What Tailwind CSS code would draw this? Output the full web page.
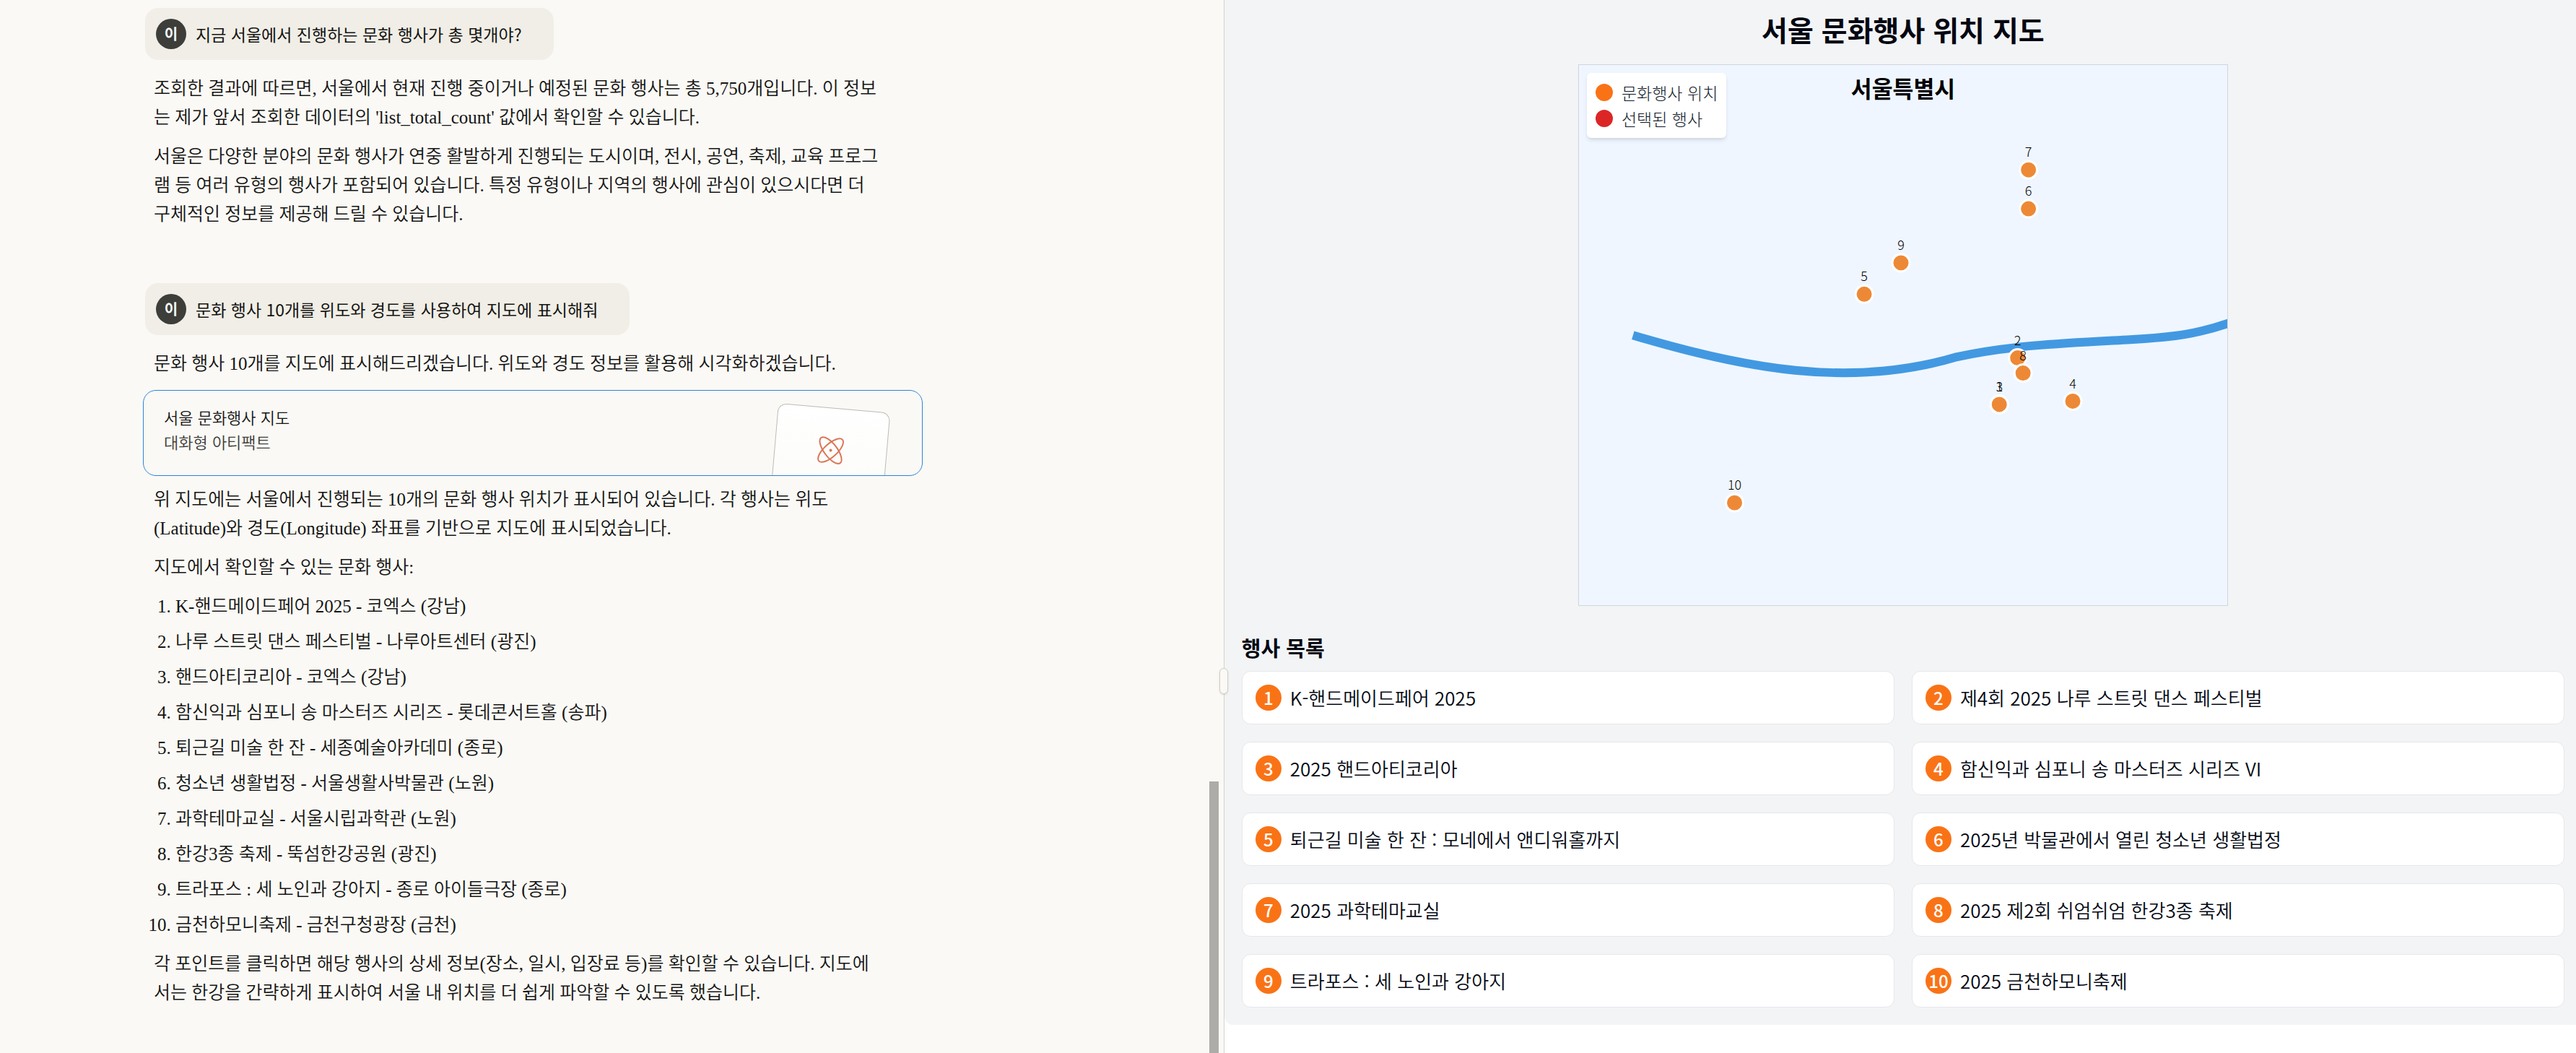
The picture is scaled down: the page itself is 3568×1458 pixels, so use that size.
<!DOCTYPE html>
<html lang="ko">
<head>
<meta charset="utf-8">
<meta name="viewport" content="width=device-width, initial-scale=1">
<title>서울 문화행사 지도</title>
<script src="https://cdn.jsdelivr.net/npm/@tailwindcss/browser@4"></script>
</head>
<body class="flex min-h-screen bg-white font-['Noto_Sans_CJK_KR','Noto_Sans',sans-serif]">

<!-- Conversation -->
<main class="flex w-[47.5%] shrink-0 bg-[#faf9f5] text-[#141413]">
  <div class="min-w-0 flex-1 pt-[11px] pr-4 pl-[198px] font-['Liberation_Serif','Noto_Sans_CJK_KR',serif] text-[25px] leading-[40px] font-[350]">
    <div class="ml-[3px] flex h-[72px] w-fit items-center gap-[13px] rounded-[18px] bg-[#f0eee6] pr-11 pl-[15px] font-['Noto_Sans_CJK_KR',sans-serif] text-[23px] font-normal">
      <span class="flex size-[42px] items-center justify-center rounded-full bg-[#3d3d3a] text-[20px] font-bold text-[#faf9f5]">이</span>
      <p>지금 서울에서 진행하는 문화 행사가 총 몇개야?</p>
    </div>
    <div class="mt-5 ml-[15px] space-y-[14px]">
      <p>조회한 결과에 따르면, 서울에서 현재 진행 중이거나 예정된 문화 행사는 총 5,750개입니다. 이 정보<br>는 제가 앞서 조회한 데이터의 'list_total_count' 값에서 확인할 수 있습니다.</p>
      <p>서울은 다양한 분야의 문화 행사가 연중 활발하게 진행되는 도시이며, 전시, 공연, 축제, 교육 프로그<br>램 등 여러 유형의 행사가 포함되어 있습니다. 특정 유형이나 지역의 행사에 관심이 있으시다면 더<br>구체적인 정보를 제공해 드릴 수 있습니다.</p>
    </div>

    <div class="mt-[75px] ml-[3px] flex h-[72px] w-fit items-center gap-[13px] rounded-[18px] bg-[#f0eee6] pr-11 pl-[15px] font-['Noto_Sans_CJK_KR',sans-serif] text-[23px] font-normal">
      <span class="flex size-[42px] items-center justify-center rounded-full bg-[#3d3d3a] text-[20px] font-bold text-[#faf9f5]">이</span>
      <p>문화 행사 10개를 위도와 경도를 사용하여 지도에 표시해줘</p>
    </div>
    <p class="mt-5 ml-[15px]">문화 행사 10개를 지도에 표시해드리겠습니다. 위도와 경도 정보를 활용해 시각화하겠습니다.</p>

    <button type="button" class="relative mt-4 flex h-[119px] w-full max-w-[1080px] flex-col justify-center overflow-hidden rounded-[18px] border border-[#2c84db] pb-3 pl-7 text-left font-['Noto_Sans_CJK_KR',sans-serif] text-[22px] leading-[34px]">
      <span>서울 문화행사 지도</span>
      <span class="text-[#3d3d3a]">대화형 아티팩트</span>
      <span class="absolute top-[17px] right-[43px] flex h-[180px] w-[156px] origin-top-left rotate-5 justify-center rounded-xl border border-[#bdbcb7] bg-linear-to-b from-white to-[#faf9f5] pt-[34px]">
        <svg class="size-12" viewBox="0 0 48 48" fill="none" stroke="#d97757" stroke-width="2" aria-hidden="true">
          <ellipse cx="24" cy="24" rx="22" ry="9" transform="rotate(48 24 24)"/>
          <ellipse cx="24" cy="24" rx="22" ry="9" transform="rotate(-47 24 24)"/>
          <circle cx="24" cy="24" r="2" fill="#d97757" stroke="none"/>
        </svg>
      </span>
    </button>

    <div class="mt-[13px] ml-[15px] space-y-[14px]">
      <p>위 지도에는 서울에서 진행되는 10개의 문화 행사 위치가 표시되어 있습니다. 각 행사는 위도<br>(Latitude)와 경도(Longitude) 좌표를 기반으로 지도에 표시되었습니다.</p>
      <p>지도에서 확인할 수 있는 문화 행사:</p>
      <ol class="list-decimal space-y-[9px] pl-[30px]">
        <li>K-핸드메이드페어 2025 - 코엑스 (강남)</li>
        <li>나루 스트릿 댄스 페스티벌 - 나루아트센터 (광진)</li>
        <li>핸드아티코리아 - 코엑스 (강남)</li>
        <li>함신익과 심포니 송 마스터즈 시리즈 - 롯데콘서트홀 (송파)</li>
        <li>퇴근길 미술 한 잔 - 세종예술아카데미 (종로)</li>
        <li>청소년 생활법정 - 서울생활사박물관 (노원)</li>
        <li>과학테마교실 - 서울시립과학관 (노원)</li>
        <li>한강3종 축제 - 뚝섬한강공원 (광진)</li>
        <li>트라포스 : 세 노인과 강아지 - 종로 아이들극장 (종로)</li>
        <li>금천하모니축제 - 금천구청광장 (금천)</li>
      </ol>
      <p>각 포인트를 클릭하면 해당 행사의 상세 정보(장소, 일시, 입장료 등)를 확인할 수 있습니다. 지도에<br>서는 한강을 간략하게 표시하여 서울 내 위치를 더 쉽게 파악할 수 있도록 했습니다.</p>
    </div>
  </div>
  <div class="flex w-5 shrink-0 flex-col justify-end" aria-hidden="true">
    <div class="h-[376px] w-[13px] bg-[#adaca8]"></div>
  </div>
</main>

<!-- Artifact preview -->
<section class="relative min-w-0 flex-1 border-l border-[#d5d4cf] bg-white text-[#030712]">
  <div class="absolute top-[925px] -left-[7px] h-9 w-3 rounded-full border border-[#d1cfc5] bg-[#faf9f5] shadow-sm"></div>
  <div class="rounded-bl-xl bg-gray-100 pr-4 pb-6 pl-6">
    <h1 class="pt-4 text-center text-[39px] leading-[48px] font-bold">서울 문화행사 위치 지도</h1>

    <div class="relative mx-auto mt-[25px] w-full max-w-[900px] border border-gray-300 bg-[#eff6ff]">
      <svg class="block w-full" viewBox="0 0 600 500" role="img" aria-label="서울특별시 문화행사 위치" font-size="12" text-anchor="middle">
        <path d="M50 250C150 280 250 300 350 270C400 259 455 257 510 254C550 252 575 249 612 235" fill="none" stroke="#4299e1" stroke-width="8"/>
        <text x="300" y="30" font-size="21" font-weight="700">서울특별시</text>
        <g id="points" fill="#ed8936" stroke="#fff" stroke-width="2"></g>
      </svg>
      <div class="absolute top-[11px] left-[11px] flex flex-col rounded-md bg-white py-[9px] pr-3 pl-3 text-[23px] leading-9 font-light text-gray-900 shadow-md">
        <div class="flex items-center gap-3"><span class="size-6 rounded-full bg-[#f97316]"></span>문화행사 위치</div>
        <div class="flex items-center gap-3"><span class="size-6 rounded-full bg-[#dc2626]"></span>선택된 행사</div>
      </div>
    </div>

    <h2 class="mt-9 text-[29px] leading-[42px] font-bold">행사 목록</h2>
    <div id="events" class="mt-3 grid grid-cols-2 gap-6 text-[26px] leading-9 font-[350]"></div>
  </div>
</section>

<script>
  const points = [
    [1, 389, 314], [2, 406, 271], [3, 389, 314], [4, 457, 311], [5, 264, 212],
    [6, 416, 133], [7, 416, 97], [8, 411, 285], [9, 298, 183], [10, 144, 405]
  ];
  const titles = [
    'K-핸드메이드페어 2025', '제4회 2025 나루 스트릿 댄스 페스티벌', '2025 핸드아티코리아',
    '함신익과 심포니 송 마스터즈 시리즈 VI', '퇴근길 미술 한 잔 : 모네에서 앤디워홀까지',
    '2025년 박물관에서 열린 청소년 생활법정', '2025 과학테마교실',
    '2025 제2회 쉬엄쉬엄 한강3종 축제', '트라포스 : 세 노인과 강아지', '2025 금천하모니축제'
  ];
  document.getElementById('points').innerHTML = points.map(([n, x, y]) =>
    `<circle cx="${x}" cy="${y}" r="8"/><text x="${x}" y="${y - 12}" fill="#000" stroke="none" font-weight="300">${n}</text>`).join('');
  document.getElementById('events').innerHTML = titles.map((t, i) =>
    `<button type="button" class="flex h-[74px] items-center gap-3 rounded-xl border border-gray-200 bg-white px-[18px] text-left"><span class="flex size-9 shrink-0 items-center justify-center rounded-full bg-[#f97316] text-[24px] font-medium text-white">${i + 1}</span>${t}</button>`).join('');
</script>
</body>
</html>
